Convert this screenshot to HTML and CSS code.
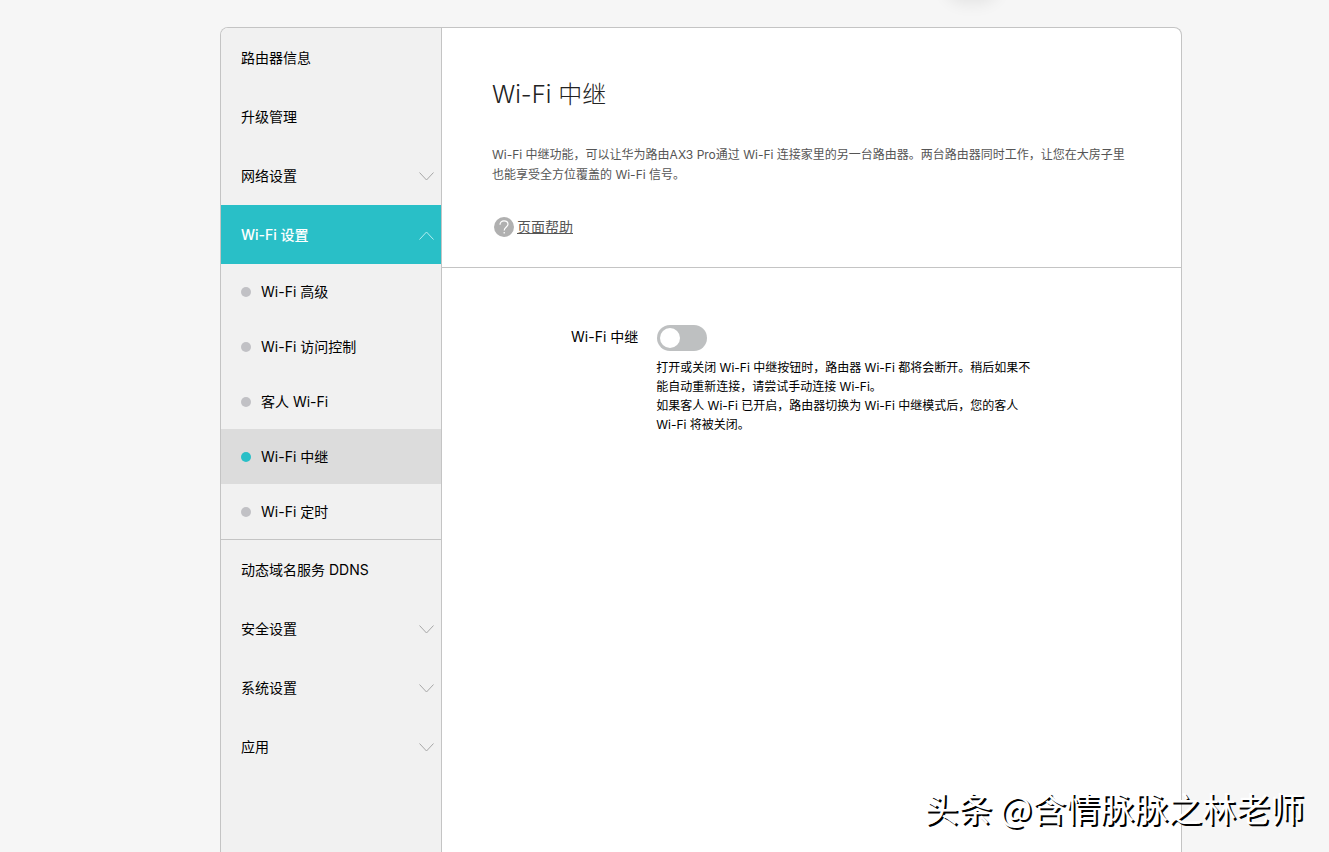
FILE: index.html
```
<!DOCTYPE html>
<html lang="zh-CN">

<head>
    <meta charset="UTF-8">
    <meta name="viewport" content="width=device-width, initial-scale=1.0">
    <title>Wi-Fi 中继</title>
    <link rel="stylesheet" href="styles.css">
</head>

<body>
    <div class="top_shadow"></div>

    <div class="box">
        <nav class="menu">
            <a class="menu_item" href="#">路由器信息</a>
            <a class="menu_item" href="#">升级管理</a>
            <button class="menu_item" type="button">网络设置
                <svg class="arrow" viewBox="0 0 15 9"><path d="M0.5 0.5L7.5 8L14.5 0.5" /></svg>
            </button>
            <button class="menu_item active" type="button">Wi-Fi 设置
                <svg class="arrow" viewBox="0 0 15 9"><path d="M0.5 8.5L7.5 1L14.5 8.5" /></svg>
            </button>
            <!-- Wi-Fi 设置的子菜单 -->
            <div class="sub">
                <a class="sub_item" href="#">Wi-Fi 高级</a>
                <a class="sub_item" href="#">Wi-Fi 访问控制</a>
                <a class="sub_item" href="#">客人 Wi-Fi</a>
                <a class="sub_item current" href="#">Wi-Fi 中继</a>
                <a class="sub_item" href="#">Wi-Fi 定时</a>
            </div>
            <a class="menu_item" href="#">动态域名服务 DDNS</a>
            <button class="menu_item" type="button">安全设置
                <svg class="arrow" viewBox="0 0 15 9"><path d="M0.5 0.5L7.5 8L14.5 0.5" /></svg>
            </button>
            <button class="menu_item" type="button">系统设置
                <svg class="arrow" viewBox="0 0 15 9"><path d="M0.5 0.5L7.5 8L14.5 0.5" /></svg>
            </button>
            <button class="menu_item" type="button">应用
                <svg class="arrow" viewBox="0 0 15 9"><path d="M0.5 0.5L7.5 8L14.5 0.5" /></svg>
            </button>
        </nav>

        <main class="content">
            <div class="intro">
                <h1 class="title">Wi-Fi 中继</h1>
                <p class="desc">Wi-Fi 中继功能，可以让华为路由AX3 Pro通过 Wi-Fi 连接家里的另一台路由器。两台路由器同时工作，让您在大房子里也能享受全方位覆盖的 Wi-Fi 信号。</p>
                <a class="help" href="#">
                    <svg class="help_icon" viewBox="0 0 20 20">
                        <circle cx="10" cy="10" r="10" />
                        <path d="M6 7.8C6 5.2 7.7 3.8 10 3.8C12.4 3.8 14 5.3 14 7.3C14 9.8 10.2 10.2 10.2 13.4" />
                        <path d="M10.2 15V16.4" />
                    </svg>
                    <span class="help_text">页面帮助</span>
                </a>
            </div>

            <div class="setting">
                <label class="setting_name" for="relay">Wi-Fi 中继</label>
                <div class="setting_main">
                    <input class="switch" type="checkbox" id="relay">
                    <p class="tips">打开或关闭 Wi-Fi 中继按钮时，路由器 Wi-Fi 都将会断开。稍后如果不能自动重新连接，请尝试手动连接 Wi-Fi。<br>如果客人 Wi-Fi 已开启，路由器切换为 Wi-Fi 中继模式后，您的客人 Wi-Fi 将被关闭。</p>
                </div>
            </div>
        </main>
    </div>

    <div class="mark">头条 @含情脉脉之林老师</div>
</body>

</html>
```

FILE: styles.css
```
* {
    box-sizing: border-box;
}

body {
    margin: 0;
    min-height: 100vh;
    padding: 27px 147px 0 220px;
    display: flex;
    flex-direction: column;
    position: relative;
    overflow-x: hidden;
    background-color: #f6f6f6;
    color: #000;
    font-family: Inter, "Noto Sans CJK SC", sans-serif;
    font-size: 14px;
}

a {
    color: inherit;
    text-decoration: none;
}

/* 顶部浮层的投影 */
.top_shadow {
    width: 44px;
    height: 20px;
    border-radius: 50%;
    position: absolute;
    top: -24px;
    left: 950px;
    box-shadow: 0 4px 16px 4px rgba(0, 0, 0, 0.08);
}

.box {
    flex: 1;
    display: flex;
    border: 1px solid #c4c4c4;
    border-bottom: none;
    border-radius: 8px 8px 0 0;
    background-color: #fff;
    overflow: hidden;
}

/* 左侧菜单 */
.menu {
    width: 221px;
    flex-shrink: 0;
    border-right: 1px solid #c4c4c4;
    background-color: #f1f1f1;
}

.menu_item {
    width: 100%;
    height: 59px;
    padding: 0 7px 2px 20px;
    display: flex;
    justify-content: space-between;
    align-items: center;
    border: none;
    background: none;
    color: inherit;
    font: inherit;
    cursor: pointer;
}

.menu_item.active {
    background-color: #29bfc7;
    color: #fff;
    font-weight: 500;
}

.arrow {
    width: 15px;
    height: 9px;
    margin-top: 3px;
    fill: none;
    stroke: #a8a8a8;
    stroke-width: 1;
}

.active .arrow {
    stroke: #b4eef0;
}

.sub {
    border-bottom: 1px solid #c4c4c4;
}

.sub_item {
    height: 55px;
    padding: 0 0 2px 20px;
    display: flex;
    align-items: center;
    gap: 10px;
}

.sub_item::before {
    content: "";
    width: 10px;
    height: 10px;
    margin-top: 2px;
    border-radius: 50%;
    background-color: #c1c1c5;
}

.sub_item.current {
    background-color: #dcdcdc;
}

.sub_item.current::before {
    background-color: #29bfc7;
}

/* 右侧内容 */
.content {
    flex: 1;
    min-width: 0;
}

.intro {
    padding: 49px 50px 29px 50px;
    border-bottom: 1px solid #c4c4c4;
}

.title {
    margin: 0;
    color: #222;
    font-size: 24px;
    font-weight: 300;
    line-height: 36px;
}

.desc {
    margin: 32px 0 31px;
    color: #555;
    font-size: 12px;
    line-height: 20px;
}

.help {
    padding-left: 2px;
    display: inline-flex;
    align-items: center;
    gap: 3px;
    color: #555;
    vertical-align: top;
}

.help_icon {
    width: 20px;
    height: 20px;
    fill: #b0b0b0;
}

.help_icon path {
    fill: none;
    stroke: #fff;
    stroke-width: 1.2;
}

.help_text {
    line-height: 22px;
    text-decoration: underline;
}

.setting {
    padding: 57px 50px 50px 129px;
    display: flex;
    gap: 18px;
}

.setting_name {
    line-height: 24px;
    white-space: nowrap;
}

.setting_main {
    max-width: 380px;
}

.switch {
    appearance: none;
    width: 50px;
    height: 26px;
    margin: 0 0 0 1px;
    padding: 3px;
    display: block;
    border-radius: 13px;
    background-color: #bec0c1;
    cursor: pointer;
}

.switch::before {
    content: "";
    width: 20px;
    height: 20px;
    display: block;
    border-radius: 50%;
    background-color: #fff;
}

.switch:checked {
    padding-left: 27px;
    background-color: #29bfc7;
}

.tips {
    margin: 7px 0 0;
    font-size: 12px;
    line-height: 19px;
}

.mark {
    position: absolute;
    right: 25px;
    bottom: 20px;
    color: #fff;
    font-family: "Noto Sans CJK SC", sans-serif;
    font-size: 34px;
    line-height: 48px;
    text-shadow: 2px 2px 0 #000;
    white-space: nowrap;
}
```
